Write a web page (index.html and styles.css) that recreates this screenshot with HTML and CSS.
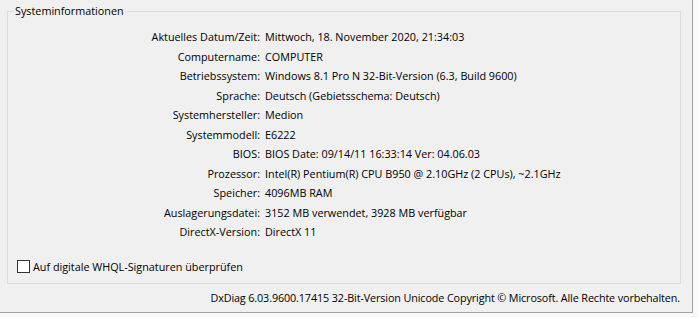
FILE: index.html
```html
<!DOCTYPE html>
<html lang="de">
<head>
    <meta charset="UTF-8">
    <title>DirectX-Diagnoseprogramm</title>
    <link rel="stylesheet" href="styles.css">
</head>
<body>
    <div class="page">
        <fieldset class="group">
            <legend>Systeminformationen</legend>
            <div class="info">
                <span class="label">Aktuelles Datum/Zeit:</span><span>Mittwoch, 18. November 2020, 21:34:03</span>
                <span class="label">Computername:</span><span>COMPUTER</span>
                <span class="label">Betriebssystem:</span><span>Windows 8.1 Pro N 32-Bit-Version (6.3, Build 9600)</span>
                <span class="label">Sprache:</span><span>Deutsch (Gebietsschema: Deutsch)</span>
                <span class="label">Systemhersteller:</span><span>Medion</span>
                <span class="label">Systemmodell:</span><span>E6222</span>
                <span class="label">BIOS:</span><span>BIOS Date: 09/14/11 16:33:14 Ver: 04.06.03</span>
                <span class="label">Prozessor:</span><span>Intel(R) Pentium(R) CPU B950 @ 2.10GHz (2 CPUs), ~2.1GHz</span>
                <span class="label">Speicher:</span><span>4096MB RAM</span>
                <span class="label">Auslagerungsdatei:</span><span>3152 MB verwendet, 3928 MB verfügbar</span>
                <span class="label">DirectX-Version:</span><span>DirectX 11</span>
            </div>
            <label class="check">
                <span class="box"></span>
                Auf digitale WHQL-Signaturen überprüfen
            </label>
        </fieldset>
        <div class="footer">DxDiag 6.03.9600.17415 32-Bit-Version Unicode Copyright © Microsoft. Alle Rechte vorbehalten.</div>
    </div>
</body>
</html>
```
FILE: styles.css
```css
body {
    margin: 0;
    background-color: #f9f9f9;
    font-family: "Open Sans", "Noto Sans", Arial, sans-serif;
    font-size: 10.8px;
    color: #000;
}

.page {
    width: 692px;
    height: 308px;
    background-color: #f0f0f0;
    border-right: 1px solid #a0a0a0;
    border-bottom: 1px solid #a0a0a0;
    padding-top: 4px;
}

.group {
    margin: 0 11px 0 7px;
    border: 1px solid #dcdcdc;
    padding: 9px 0 10px 0;
}

.group legend {
    padding: 0 3px 0 2px;
    margin-left: 5px;
    line-height: 14px;
}

.info {
    display: grid;
    grid-template-columns: 252px auto;
    column-gap: 5px;
    line-height: 19.5px;
}

.label {
    text-align: right;
}

.check {
    display: flex;
    align-items: center;
    gap: 3px;
    margin: 18px 0 0 9px;
    line-height: 13px;
}

.box {
    width: 11px;
    height: 11px;
    border: 1px solid #333;
    background-color: #fff;
}

.footer {
    text-align: right;
    padding: 7px 12px 0 0;
    line-height: 14px;
    letter-spacing: -0.12px;
}
```
